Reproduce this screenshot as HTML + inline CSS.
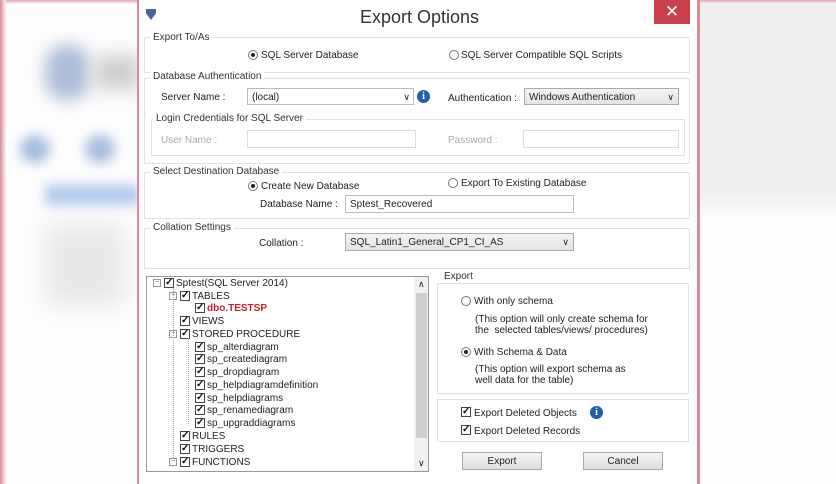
<!DOCTYPE html>
<html><head><meta charset="utf-8"><style>
*{margin:0;padding:0;box-sizing:border-box}
body{width:836px;height:484px;overflow:hidden;position:relative;background:#fdfdfd;font-family:"Liberation Sans",sans-serif;font-size:10px;color:#222}
.a{position:absolute}
.g{position:absolute;border:1px solid #e2e2e2}
.lbl{position:absolute;background:#fff;padding:0 3px;color:#333;font-size:10px;margin-top:1px}
.rad{position:absolute;width:10px;height:10px;border:1px solid #777;border-radius:50%;background:#fff}
.rad.on::after{content:"";position:absolute;left:2px;top:2px;width:4px;height:4px;border-radius:50%;background:#222}
.cb{position:absolute;width:10px;height:10px;border:1px solid #444;background:#fff;font-size:10px;line-height:8px;text-align:center;font-weight:bold;color:#111}
.inp{position:absolute;border:1px solid #bbb;background:#fff;padding-left:4px;line-height:17px}
.sel{position:absolute;border:1px solid #aaa;background:linear-gradient(#f4f4f4,#e4e4e4);padding-left:4px;line-height:17px}
.sel .ar{position:absolute;right:4px;top:0;font-size:9px}
.info{position:absolute;width:13px;height:13px;border-radius:50%;background:#1f5fae;color:#fff;font-weight:bold;font-size:10px;text-align:center;line-height:13px;font-family:"Liberation Serif",serif}
.btn{position:absolute;border:1px solid #aaa;background:linear-gradient(#f5f5f5,#dedede);text-align:center;line-height:17px}
.t{position:absolute;white-space:nowrap;margin-top:2px}
.blur{opacity:.7}
</style></head><body>
<div class="a" style="left:0;top:0;width:836px;height:4px;background:linear-gradient(#e5a3b0,#fdfdfd)"></div>
<div class="a" style="left:0;top:0;width:6px;height:484px;background:linear-gradient(90deg,#dc8d9c,#fdf5f6)"></div>
<div class="a" style="left:700px;top:4px;width:136px;height:200px;background:#efefef"></div>
<div class="a" style="left:700px;top:190px;width:136px;height:30px;background:linear-gradient(#efefef,#fdfdfd)"></div>
<div class="blur">
<div class="a" style="left:45px;top:45px;width:45px;height:55px;border-radius:40%;background:#8aa2c8;filter:blur(8px)"></div>
<div class="a" style="left:95px;top:55px;width:45px;height:35px;background:#bbb;filter:blur(9px)"></div>
<div class="a" style="left:20px;top:135px;width:30px;height:28px;border-radius:50%;background:#7ea1d2;filter:blur(6px)"></div>
<div class="a" style="left:85px;top:135px;width:30px;height:28px;border-radius:50%;background:#7ea1d2;filter:blur(6px)"></div>
<div class="a" style="left:45px;top:185px;width:95px;height:20px;background:#8fb3e2;filter:blur(6px)"></div>
<div class="a" style="left:45px;top:225px;width:80px;height:80px;background:#ccc;filter:blur(12px);opacity:.6"></div>
</div>
<div class="a" style="left:137px;top:0;width:563px;height:484px;background:#fff;border-left:2px solid #d88a9a;border-right:3px solid #d88a9a"></div>
<div class="a" style="left:146px;top:9px;width:10px;height:11px;background:#45679a;clip-path:polygon(0 0,100% 0,100% 40%,50% 100%,0 40%)"></div>
<div class="t" style="left:360px;top:5px;font-size:18px;color:#333">Export Options</div>
<div class="a" style="left:654px;top:0;width:36px;height:24px;background:#c9404a;color:#fff;font-size:17px;text-align:center;line-height:23px">✕</div>

<div class="g" style="left:144px;top:37px;width:546px;height:36px"></div>
<div class="lbl" style="left:150px;top:31px">Export To/As</div>
<div class="rad on" style="left:248px;top:50px"></div><div class="t" style="left:261px;top:48px">SQL Server Database</div>
<div class="rad" style="left:449px;top:50px"></div><div class="t" style="left:461px;top:48px">SQL Server Compatible SQL Scripts</div>

<div class="g" style="left:144px;top:78px;width:546px;height:86px"></div>
<div class="lbl" style="left:150px;top:70px">Database Authentication</div>
<div class="t" style="left:161px;top:90px">Server Name :</div>
<div class="inp" style="left:247px;top:88px;width:167px;height:17px">(local)<span style="position:absolute;right:3px;font-size:9px">∨</span></div>
<div class="info" style="left:417px;top:90px">i</div>
<div class="t" style="left:448px;top:91px">Authentication :</div>
<div class="sel" style="left:524px;top:88px;width:155px;height:17px">Windows Authentication<span class="ar">∨</span></div>
<div class="g" style="left:151px;top:119px;width:534px;height:37px"></div>
<div class="lbl" style="left:153px;top:112px">Login Credentials for SQL Server</div>
<div class="t" style="left:161px;top:133px;color:#aaa">User Name :</div>
<div class="inp" style="left:247px;top:130px;width:169px;height:18px;border-color:#ddd"></div>
<div class="t" style="left:448px;top:133px;color:#aaa">Password :</div>
<div class="inp" style="left:523px;top:130px;width:156px;height:18px;border-color:#ddd"></div>

<div class="g" style="left:144px;top:172px;width:546px;height:47px"></div>
<div class="lbl" style="left:150px;top:165px">Select Destination Database</div>
<div class="rad on" style="left:248px;top:181px"></div><div class="t" style="left:261px;top:179px">Create New Database</div>
<div class="rad" style="left:448px;top:178px"></div><div class="t" style="left:461px;top:176px">Export To Existing Database</div>
<div class="inp" style="left:345px;top:195px;width:229px;height:18px">Sptest_Recovered</div>
<div class="t" style="left:260px;top:197px">Database Name :</div>

<div class="g" style="left:144px;top:228px;width:546px;height:41px"></div>
<div class="lbl" style="left:150px;top:221px">Collation Settings</div>
<div class="t" style="left:259px;top:236px">Collation :</div>
<div class="sel" style="left:345px;top:233px;width:229px;height:18px">SQL_Latin1_General_CP1_CI_AS<span class="ar">∨</span></div>

<div class="a" style="left:146px;top:276px;width:283px;height:196px;border:1px solid #999;background:#fff;overflow:hidden">
<div class="a" style="left:267px;top:0;width:15px;height:194px;background:#f0f0f0"></div>
<div class="a" style="left:269px;top:16px;width:11px;height:145px;background:#cfcfcf"></div>
<div class="a" style="left:271px;top:2px;font-size:9px">∧</div>
<div class="a" style="left:271px;top:181px;font-size:9px">∨</div>
</div>

<div class="g" style="left:437px;top:283px;width:252px;height:111px"></div>
<div class="lbl" style="left:441px;top:270px">Export</div>
<div class="rad" style="left:461px;top:296px"></div><div class="t" style="left:474px;top:294px">With only schema</div>
<div class="t" style="left:475px;top:312px;line-height:11px">(This option will only create schema for<br>the &nbsp;selected tables/views/ procedures)</div>
<div class="rad on" style="left:461px;top:347px"></div><div class="t" style="left:474px;top:345px">With Schema &amp; Data</div>
<div class="t" style="left:475px;top:362px;line-height:11px">(This option will export schema as<br>well data for the table)</div>

<div class="g" style="left:437px;top:399px;width:252px;height:43px"></div>
<div class="cb" style="left:461px;top:407px">✓</div><div class="t" style="left:474px;top:406px">Export Deleted Objects</div>
<div class="info" style="left:590px;top:406px">i</div>
<div class="cb" style="left:461px;top:425px">✓</div><div class="t" style="left:474px;top:424px">Export Deleted Records</div>

<div class="btn" style="left:462px;top:452px;width:80px;height:18px">Export</div>
<div class="btn" style="left:583px;top:452px;width:80px;height:18px">Cancel</div>

<div class="a" style="left:153px;top:279px;width:8px;height:8px;border:1px solid #999;font-size:7px;line-height:6px;text-align:center;color:#666">−</div>
<div class="cb" style="left:164px;top:278px">✓</div><div class="t" style="left:176px;top:276px">Sptest(SQL Server 2014)</div>
<div class="a" style="left:169px;top:292px;width:8px;height:8px;border:1px solid #999;font-size:7px;line-height:6px;text-align:center;color:#666">−</div>
<div class="cb" style="left:180px;top:291px">✓</div><div class="t" style="left:192px;top:289px">TABLES</div>
<div class="cb" style="left:195px;top:303px">✓</div><div class="t" style="left:207px;top:301px;color:#d0202a;font-weight:bold">dbo.TESTSP</div>
<div class="cb" style="left:180px;top:316px">✓</div><div class="t" style="left:192px;top:314px">VIEWS</div>
<div class="a" style="left:169px;top:330px;width:8px;height:8px;border:1px solid #999;font-size:7px;line-height:6px;text-align:center;color:#666">−</div>
<div class="cb" style="left:180px;top:329px">✓</div><div class="t" style="left:192px;top:327px">STORED PROCEDURE</div>
<div class="cb" style="left:195px;top:342px">✓</div><div class="t" style="left:207px;top:340px">sp_alterdiagram</div>
<div class="cb" style="left:195px;top:354px">✓</div><div class="t" style="left:207px;top:352px">sp_creatediagram</div>
<div class="cb" style="left:195px;top:367px">✓</div><div class="t" style="left:207px;top:365px">sp_dropdiagram</div>
<div class="cb" style="left:195px;top:380px">✓</div><div class="t" style="left:207px;top:378px">sp_helpdiagramdefinition</div>
<div class="cb" style="left:195px;top:393px">✓</div><div class="t" style="left:207px;top:391px">sp_helpdiagrams</div>
<div class="cb" style="left:195px;top:405px">✓</div><div class="t" style="left:207px;top:403px">sp_renamediagram</div>
<div class="cb" style="left:195px;top:418px">✓</div><div class="t" style="left:207px;top:416px">sp_upgraddiagrams</div>
<div class="cb" style="left:180px;top:431px">✓</div><div class="t" style="left:192px;top:429px">RULES</div>
<div class="cb" style="left:180px;top:444px">✓</div><div class="t" style="left:192px;top:442px">TRIGGERS</div>
<div class="a" style="left:169px;top:458px;width:8px;height:8px;border:1px solid #999;font-size:7px;line-height:6px;text-align:center;color:#666">−</div>
<div class="cb" style="left:180px;top:457px">✓</div><div class="t" style="left:192px;top:455px">FUNCTIONS</div>
<div class="a" style="left:173px;top:288px;height:170px;border-left:1px dotted #aaa"></div>
<div class="a" style="left:188px;top:338px;height:86px;border-left:1px dotted #aaa"></div>
</body></html>
